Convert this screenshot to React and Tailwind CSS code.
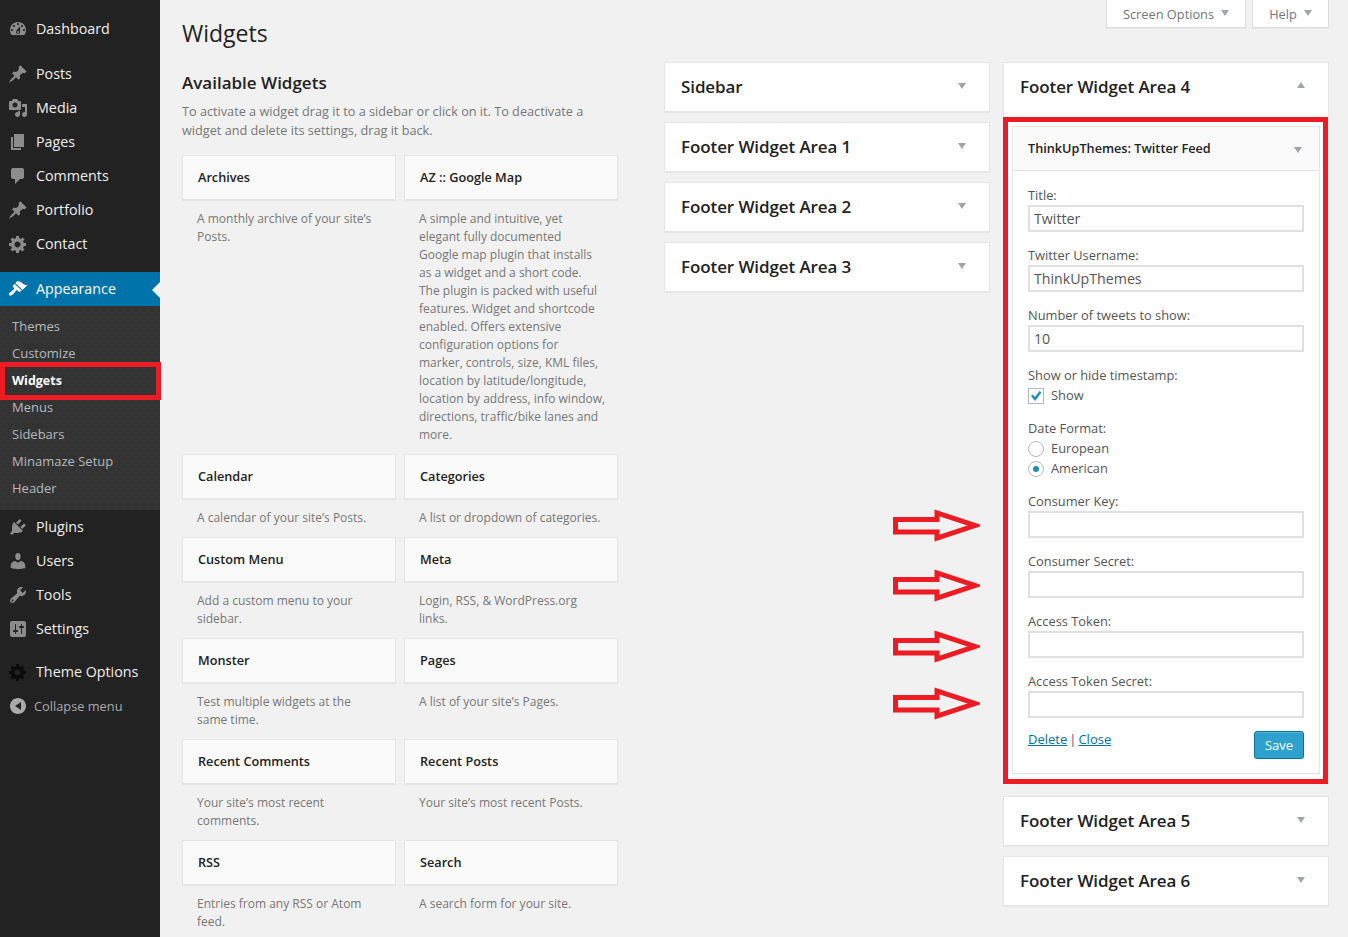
import React from "react";

const icons = {
  dashboard: "M3.76 16h12.48c1.1-1.37 1.76-3.11 1.76-5 0-4.42-3.58-8-8-8s-8 3.58-8 8c0 1.89.66 3.63 1.76 5zM10 4c.55 0 1 .45 1 1s-.45 1-1 1-1-.45-1-1 .45-1 1-1zM6 6c.55 0 1 .45 1 1s-.45 1-1 1-1-.45-1-1 .45-1 1-1zm8 0c.55 0 1 .45 1 1s-.45 1-1 1-1-.45-1-1 .45-1 1-1zm-5.37 5.55L12 7v6c0 1.1-.9 2-2 2s-2-.9-2-2c0-.57.24-1.08.63-1.45zM4 10c.55 0 1 .45 1 1s-.45 1-1 1-1-.45-1-1 .45-1 1-1zm12 0c.55 0 1 .45 1 1s-.45 1-1 1-1-.45-1-1 .45-1 1-1zm-5 3c0-.55-.45-1-1-1s-1 .45-1 1 .45 1 1 1 1-.45 1-1z",
  post: "M10.44 3.02l1.82-1.82 6.36 6.35-1.83 1.82c-1.05-.68-2.48-.57-3.41.36l-.75.75c-.92.93-1.04 2.35-.35 3.41l-1.83 1.82-2.41-2.41-2.8 2.79c-.42.42-3.38 2.71-3.8 2.29s1.86-3.39 2.28-3.81l2.79-2.79L4.1 9.36l1.83-1.82c1.05.69 2.48.57 3.4-.36l.75-.75c.93-.92 1.05-2.35.36-3.41z",
  media: "M13 11V4c0-.55-.45-1-1-1h-1.67L9 1H5L3.67 3H2c-.55 0-1 .45-1 1v7c0 .55.45 1 1 1h10c.55 0 1-.45 1-1zM7 4.5c1.38 0 2.5 1.12 2.5 2.5S8.38 9.5 7 9.5 4.5 8.38 4.5 7 5.62 4.5 7 4.5zM14 6h5v10.5c0 1.38-1.12 2.5-2.5 2.5S14 17.88 14 16.5s1.12-2.5 2.5-2.5c.17 0 .34.02.5.05V9h-3V6zm-4 8.05V13h2v3.5c0 1.38-1.12 2.5-2.5 2.5S7 17.88 7 16.5 8.12 14 9.5 14c.17 0 .34.02.5.05z",
  page: "M6 15V2h10v13H6zm-1 1h8v2H3V5h2v11z",
  comments: "M5 2h9c1.1 0 2 .9 2 2v7c0 1.1-.9 2-2 2h-2l-5 5v-5H5c-1.1 0-2-.9-2-2V4c0-1.1.9-2 2-2z",
  gear: "M18 12h-2.18c-.17.7-.44 1.35-.81 1.93l1.54 1.54-2.1 2.1-1.54-1.54c-.58.36-1.23.63-1.91.79V19H8v-2.18c-.68-.16-1.33-.43-1.91-.79l-1.54 1.54-2.12-2.12 1.54-1.54c-.36-.58-.63-1.23-.79-1.91H1V9.03h2.17c.16-.7.44-1.35.8-1.94L2.43 5.55l2.1-2.1 1.54 1.54c.58-.37 1.24-.64 1.93-.81V2h3v2.18c.68.16 1.33.43 1.91.79l1.54-1.54 2.12 2.12-1.54 1.54c.36.59.64 1.24.8 1.94H18V12zm-8.5 1.5c1.66 0 3-1.34 3-3s-1.34-3-3-3-3 1.34-3 3 1.34 3 3 3z",
  appearance: "M14.48 11.06L7.41 3.99l1.5-1.5c.5-.56 2.3-.47 3.51.32 1.21.8 1.43 1.28 2.91 2.1 1.18.64 2.45 1.26 4.45.85zm-.71.71L6.7 4.7 4.93 6.47c-.39.39-.39 1.02 0 1.41l1.06 1.06c.39.39.39 1.03 0 1.42-.6.6-1.43 1.11-2.21 1.69-.35.26-.7.53-1.01.84C1.43 13.23.28 15.4 1.2 16.32c.92.92 3.09-.23 4.43-1.57.31-.31.58-.66.85-1.02.57-.77 1.08-1.6 1.67-2.19.39-.39 1.03-.39 1.42 0l1.06 1.06c.39.39 1.02.39 1.41 0z",
  plugin: "M13.11 4.36L9.87 7.6 8 5.73l3.24-3.24c.35-.34 1.05-.2 1.56.32.52.51.66 1.21.31 1.55zm-8 1.77l.91-1.12 9.01 9.01-1.19.84c-.71.71-2.63 1.16-3.82 1.16H6.14L4.9 17.26c-.59.59-1.54.59-2.12 0-.59-.58-.59-1.53 0-2.12l1.24-1.24v-3.88c0-1.13.4-3.19 1.09-3.89zm7.26 3.97l3.24-3.24c.34-.35 1.04-.21 1.55.31.52.51.66 1.21.31 1.55l-3.24 3.25z",
  users: "M10 9.25c-2.27 0-2.73-3.44-2.73-3.44C7 4.02 7.82 2 9.97 2c2.16 0 2.98 2.02 2.71 3.81 0 0-.41 3.44-2.68 3.44zm0 2.57L12.72 10c2.39 0 4.52 2.33 4.52 4.53v2.49s-3.65 1.13-7.24 1.13c-3.65 0-7.24-1.13-7.24-1.13v-2.49c0-2.25 1.94-4.48 4.47-4.48z",
  tools: "M16.68 9.77c-1.34 1.34-3.3 1.67-4.95.99l-5.41 6.52c-.99.99-2.59.99-3.58 0s-.99-2.59 0-3.57l6.52-5.42c-.68-1.65-.35-3.61.99-4.95 1.28-1.28 3.12-1.62 4.72-1.06l-2.89 2.89 2.82 2.82 2.86-2.87c.53 1.58.18 3.39-1.08 4.65zM3.81 16.21c.4.39 1.04.39 1.43 0 .4-.4.4-1.04 0-1.43-.39-.4-1.03-.4-1.43 0-.39.39-.39 1.03 0 1.43z",
  settings: "M18 16V4c0-1.1-.9-2-2-2H4c-1.1 0-2 .9-2 2v12c0 1.1.9 2 2 2h12c1.1 0 2-.9 2-2zM8 11h1c.55 0 1 .45 1 1s-.45 1-1 1H8v1.5c0 .28-.22.5-.5.5s-.5-.22-.5-.5V13H6c-.55 0-1-.45-1-1s.45-1 1-1h1V5.5c0-.28.22-.5.5-.5s.5.22.5.5V11zm5-2h-1c-.55 0-1-.45-1-1s.45-1 1-1h1V5.5c0-.28.22-.5.5-.5s.5.22.5.5V7h1c.55 0 1 .45 1 1s-.45 1-1 1h-1v5.5c0 .28-.22.5-.5.5s-.5-.22-.5-.5V9z",
  collapse: "M18 10c0-4.42-3.58-8-8-8s-8 3.58-8 8 3.58 8 8 8 8-3.58 8-8zm-5-4v8l-6-4z",
};

function Dash({ name, className }) {
  return (
    <svg viewBox="0 0 20 20" className={className} fill="currentColor">
      <path d={icons[name]} />
    </svg>
  );
}

function MenuItem({ icon, label, active, iconClass }) {
  return (
    <div className={`relative flex h-[34px] items-center text-[14.3px] ${active ? "bg-[#0073aa] text-white" : "text-[#eeeeee]"}`}>
      <Dash name={icon} className={`ml-[8px] h-[20px] w-[20px] shrink-0 ${iconClass || (active ? "text-white" : "text-[#8c8c8c]")}`} />
      <span className="ml-[8px] leading-[20px]">{label}</span>
      {active && <span className="absolute right-0 top-[10px] h-0 w-0 border-y-[8px] border-r-[8px] border-y-transparent border-r-[#f1f1f1]" />}
    </div>
  );
}

function SubItem({ label, current }) {
  return (
    <div className={`flex h-[27px] items-center pl-[12px] ${current ? "pt-[1px] text-[12.5px] font-bold text-white" : "text-[13px] text-[#b4b9be]"}`}>{label}</div>
  );
}

function Sidebar() {
  return (
    <aside className="relative w-[160px] shrink-0 bg-[#222222] pt-[12px]">
      <MenuItem icon="dashboard" label="Dashboard" />
      <div className="h-[11px]" />
      <MenuItem icon="post" label="Posts" />
      <MenuItem icon="media" label="Media" />
      <MenuItem icon="page" label="Pages" />
      <MenuItem icon="comments" label="Comments" />
      <MenuItem icon="post" label="Portfolio" />
      <MenuItem icon="gear" label="Contact" />
      <div className="h-[11px]" />
      <MenuItem icon="appearance" label="Appearance" active />
      <div className="bg-[#333333] bg-[radial-gradient(#393939_1px,transparent_1px)] bg-[length:8px_8px] pb-[8px] pt-[7px]">
        <SubItem label="Themes" />
        <SubItem label="Customize" />
        <SubItem label="Widgets" current />
        <SubItem label="Menus" />
        <SubItem label="Sidebars" />
        <SubItem label="Minamaze Setup" />
        <SubItem label="Header" />
      </div>
      <MenuItem icon="plugin" label="Plugins" />
      <MenuItem icon="users" label="Users" />
      <MenuItem icon="tools" label="Tools" />
      <MenuItem icon="settings" label="Settings" />
      <div className="h-[9px]" />
      <MenuItem icon="gear" label="Theme Options" iconClass="text-[#0a0a0a]" />
      <div className="flex h-[34px] items-center text-[12.8px] text-[#aaaaaa]">
        <Dash name="collapse" className="ml-[8px] h-[20px] w-[20px] shrink-0 text-[#aaaaaa]" />
        <span className="ml-[6px] mt-[1px]">Collapse menu</span>
      </div>
      {/* annotation round the current sub item */}
      <div className="absolute left-0 top-[362px] h-[38px] w-[161px] border-[5px] border-[#ed1c24]" />
    </aside>
  );
}

function Triangle({ up, className }) {
  return (
    <span className={`h-0 w-0 border-x-[4px] border-x-transparent ${up ? "border-b-[6px] border-b-[#a0a5aa]" : "border-t-[6px] border-t-[#a0a5aa]"} ${className || ""}`} />
  );
}

function MetaButton({ label, className }) {
  return (
    <div className={`flex h-[28px] items-center justify-center gap-[7px] border border-t-0 border-[#dfdfdf] bg-white pt-[2px] text-[12.8px] text-[#72777c] shadow-[0_1px_1px_rgba(0,0,0,0.04)] ${className}`}>
      {label}
      <Triangle className="-mt-[3px]" />
    </div>
  );
}

const available = [
  { title: "Archives", desc: "A monthly archive of your site’s\nPosts." },
  { title: "AZ :: Google Map", desc: "A simple and intuitive, yet\nelegant fully documented\nGoogle map plugin that installs\nas a widget and a short code.\nThe plugin is packed with useful\nfeatures. Widget and shortcode\nenabled. Offers extensive\nconfiguration options for\nmarker, controls, size, KML files,\nlocation by latitude/longitude,\nlocation by address, info window,\ndirections, traffic/bike lanes and\nmore." },
  { title: "Calendar", desc: "A calendar of your site’s Posts." },
  { title: "Categories", desc: "A list or dropdown of categories." },
  { title: "Custom Menu", desc: "Add a custom menu to your\nsidebar." },
  { title: "Meta", desc: "Login, RSS, & WordPress.org\nlinks." },
  { title: "Monster", desc: "Test multiple widgets at the\nsame time." },
  { title: "Pages", desc: "A list of your site’s Pages." },
  { title: "Recent Comments", desc: "Your site’s most recent\ncomments." },
  { title: "Recent Posts", desc: "Your site’s most recent Posts." },
  { title: "RSS", desc: "Entries from any RSS or Atom\nfeed." },
  { title: "Search", desc: "A search form for your site." },
];

function AvailableWidget({ title, desc }) {
  return (
    <div>
      <div className="flex h-[45px] items-center border border-[#e5e5e5] bg-[#fafafa] pl-[15px] text-[12.7px] font-semibold text-[#222222] shadow-[0_1px_1px_rgba(0,0,0,0.04)]">{title}</div>
      <p className="whitespace-pre py-[10px] pl-[15px] text-[12px] leading-[18px] text-[#777777]">{desc}</p>
    </div>
  );
}

function Area({ title, up }) {
  return (
    <div className="flex h-[50px] items-center justify-between border border-[#e5e5e5] bg-white pl-[16px] pr-[23px] text-[17px] font-semibold tracking-[-0.1px] text-[#222222] shadow-[0_1px_1px_rgba(0,0,0,0.04)]">
      {title}
      <Triangle up={up} className="-mt-[3px]" />
    </div>
  );
}

function Field({ label, value }) {
  return (
    <div className="mb-[14px]">
      <div className="h-[18px] text-[12.85px] leading-[18px] text-[#555555]">{label}</div>
      <input readOnly value={value || ""} className="mt-[1px] block h-[27px] w-full border-2 border-[#e0e0e0] bg-white px-[4px] text-[14.2px] text-[#555555] outline-none" />
    </div>
  );
}

function Radio({ label, checked }) {
  return (
    <div className="mt-[4px] flex h-[16px] items-center text-[12.85px] text-[#555555]">
      <span className="flex h-[16px] w-[16px] items-center justify-center rounded-full border border-[#b4b9be] bg-white">
        {checked && <span className="h-[6px] w-[6px] rounded-full bg-[#1e8cbe]" />}
      </span>
      <span className="ml-[7px]">{label}</span>
    </div>
  );
}

function TwitterForm() {
  return (
    <div className="border border-[#e5e5e5] bg-white">
      <div className="flex h-[44px] items-center justify-between border-b border-[#e5e5e5] bg-[#fafafa] pl-[15px] pr-[17px] text-[12.7px] font-semibold text-[#222222]">
        ThinkUpThemes: Twitter Feed
        <Triangle className="mt-[2px]" />
      </div>
      <div className="px-[15px] pb-[14px] pt-[15px]">
        <Field label="Title:" value="Twitter" />
        <Field label="Twitter Username:" value="ThinkUpThemes" />
        <Field label="Number of tweets to show:" value="10" />
        <div className="h-[18px] text-[12.85px] leading-[18px] text-[#555555]">Show or hide timestamp:</div>
        <div className="mt-[4px] flex h-[16px] items-center text-[12.85px] text-[#555555]">
          <span className="flex h-[16px] w-[16px] items-center justify-center border border-[#b4b9be] bg-white">
            <svg viewBox="0 0 16 16" className="h-[16px] w-[16px] shrink-0"><path d="M3 8l1.8-1.6L7 9l4.6-6L13.4 4.4 7 13z" fill="#1e8cbe" /></svg>
          </span>
          <span className="ml-[7px]">Show</span>
        </div>
        <div className="mt-[15px] h-[18px] text-[12.85px] leading-[18px] text-[#555555]">Date Format:</div>
        <Radio label="European" />
        <Radio label="American" checked />
        <div className="mt-[15px]">
          <Field label="Consumer Key:" />
          <Field label="Consumer Secret:" />
          <Field label="Access Token:" />
          <Field label="Access Token Secret:" />
        </div>
        <div className="flex items-start justify-between">
          <div className="-mt-[2px] text-[13px] leading-[18px] text-[#555555]">
            <a className="text-[#0074a2] underline">Delete</a><span className="mx-[2px] text-[#5b4a8a]">|</span><a className="text-[#0074a2] underline">Close</a>
          </div>
          <button className="-mt-[1px] h-[28px] w-[50px] rounded-[3px] border border-[#0074a2] bg-[#2ea2cc] pt-[1px] text-[13px] text-white shadow-[inset_0_1px_0_rgba(120,200,230,0.5)]">Save</button>
        </div>
      </div>
    </div>
  );
}

function Arrow({ className }) {
  return (
    <svg viewBox="0 0 87 33" className={`absolute left-[733px] h-[33px] w-[87px] ${className}`} fill="none" stroke="#ed1c24" strokeWidth="5">
      <path d="M2.5 10.5H44V4L82 16.5 44 29V23H2.5Z" />
    </svg>
  );
}

export default function App() {
  return (
    <div className="flex h-screen overflow-hidden bg-[#f1f1f1] font-['Open_Sans',sans-serif]">
      <Sidebar />
      <main className="relative flex-1">
        <div className="flex h-[28px] justify-end gap-[6px] pr-[19px]">
          <MetaButton label="Screen Options" className="w-[140px]" />
          <MetaButton label="Help" className="w-[77px]" />
        </div>
        <div className="flex pl-[22px]">
          <section className="-mt-[10px] w-[436px]">
            <h1 className="h-[30px] text-[23px] leading-[30px] font-normal text-[#222222]">Widgets</h1>
            <h2 className="mt-[23px] text-[17px] font-semibold leading-[24px] text-[#222222]">Available Widgets</h2>
            <p className="mt-[7px] text-[12.7px] leading-[19px] text-[#777777]">To activate a widget drag it to a sidebar or click on it. To deactivate a widget and delete its settings, drag it back.</p>
            <div className="mt-[15px] grid grid-cols-[214px_214px] gap-x-[8px]">
              {available.map((w) => <AvailableWidget key={w.title} {...w} />)}
            </div>
          </section>
          <section className="ml-[46px] flex w-[326px] flex-col gap-[10px] pt-[34px]">
            <Area title="Sidebar" />
            <Area title="Footer Widget Area 1" />
            <Area title="Footer Widget Area 2" />
            <Area title="Footer Widget Area 3" />
          </section>
          <section className="ml-[13px] w-[326px] pt-[34px]">
            <div className="flex h-[55px] items-center justify-between border border-b-0 border-[#e5e5e5] bg-white pb-[7px] pl-[16px] pr-[23px] text-[17px] font-semibold tracking-[-0.1px] text-[#222222]">
              Footer Widget Area 4
              <Triangle up className="-mt-[3px]" />
            </div>
            <div className="w-[325px] border-[5px] border-[#ed1c24] bg-white pb-[5px] pl-[4px] pr-[3px] pt-[4px]">
              <TwitterForm />
            </div>
            <div className="mt-[12px] flex flex-col gap-[10px]">
              <Area title="Footer Widget Area 5" />
              <Area title="Footer Widget Area 6" />
            </div>
          </section>
        </div>
        <Arrow className="top-[509px]" />
        <Arrow className="top-[569px]" />
        <Arrow className="top-[630px]" />
        <Arrow className="top-[687px]" />
      </main>
    </div>
  );
}
